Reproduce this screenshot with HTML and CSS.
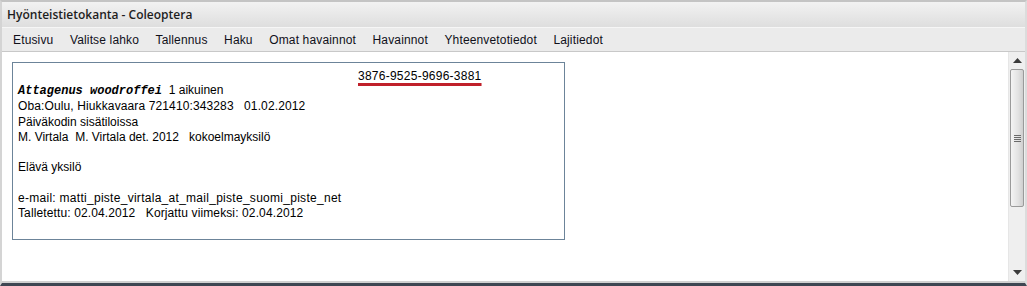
FILE: index.html
```html
<!DOCTYPE html>
<html lang="fi">

<head>
    <title>Hyönteistietokanta - Coleoptera</title>
    <link rel="stylesheet" href="styles.css">
</head>

<body>
    <div class="window">
        <div class="title-bar">Hyönteistietokanta - Coleoptera</div>

        <div class="menu-bar">
            <span class="menu-item">Etusivu</span>
            <span class="menu-item">Valitse lahko</span>
            <span class="menu-item">Tallennus</span>
            <span class="menu-item">Haku</span>
            <span class="menu-item">Omat havainnot</span>
            <span class="menu-item">Havainnot</span>
            <span class="menu-item">Yhteenvetotiedot</span>
            <span class="menu-item">Lajitiedot</span>
        </div>

        <div class="content">
            <div class="main">
                <div class="record">
                    <div class="record-id"><span class="id-code">3876-9525-9696-3881</span></div>
                    <div class="line"><span class="species">Attagenus woodroffei</span>&nbsp; 1 aikuinen</div>
                    <div class="line wide">Oba:Oulu, Hiukkavaara 721410:343283 &nbsp; 01.02.2012</div>
                    <div class="line">Päiväkodin sisätiloissa</div>
                    <div class="line">M. Virtala&nbsp; M. Virtala det. 2012 &nbsp; kokoelmayksilö</div>
                    <div class="line">&nbsp;</div>
                    <div class="line">Elävä yksilö</div>
                    <div class="line">&nbsp;</div>
                    <div class="line email">e-mail: matti_piste_virtala_at_mail_piste_suomi_piste_net</div>
                    <div class="line wide">Talletettu: 02.04.2012 &nbsp; Korjattu viimeksi: 02.04.2012</div>
                </div>
            </div>

            <div class="scrollbar">
                <div class="scroll-arrow">
                    <svg width="9" height="5" viewBox="0 0 9 5"><path d="M4.5 0 L9 5 L0 5 Z" fill="#3a3a3a"></path></svg>
                </div>
                <div class="scroll-track">
                    <div class="scroll-thumb">
                        <div class="grip"><span></span><span></span><span></span><span></span></div>
                    </div>
                </div>
                <div class="scroll-arrow">
                    <svg width="9" height="5" viewBox="0 0 9 5"><path d="M0 0 L9 0 L4.5 5 Z" fill="#3a3a3a"></path></svg>
                </div>
            </div>
        </div>
    </div>
</body>

</html>
```

FILE: styles.css
```css
html,
body {
    margin: 0;
    padding: 0;
    background-color: #ffffff;
}

.window {
    height: 286px;
    box-sizing: border-box;
    display: flex;
    flex-direction: column;
    border-top: 2px solid #c4c4c4;
    border-left: 2px solid #d4d4d4;
    border-right: 2px solid #dcdcdc;
    border-bottom: 3px solid #3e4652;
    font-family: "Liberation Sans", Arial, sans-serif;
    color: #000000;
}

.title-bar {
    height: 25px;
    line-height: 25px;
    padding-left: 5px;
    background: linear-gradient(#f2f2f2, #dedede);
    border-bottom: 1px solid #f6f6f6;
    font-family: "Open Sans", "DejaVu Sans", sans-serif;
    font-weight: 600;
    font-size: 12px;
    color: #1e1e1e;
}

.menu-bar {
    height: 23px;
    display: flex;
    align-items: center;
    padding-left: 11px;
    background-color: #ebebeb;
    border-bottom: 1px solid #c8c8c8;
    font-size: 12px;
    letter-spacing: 0.15px;
    color: #10101a;
}

.menu-item {
    margin-right: 16.5px;
}

.content {
    flex: 1;
    display: flex;
    min-height: 0;
    border-bottom: 2px solid #d0d0d0;
}

.main {
    flex: 1;
    padding: 10px 0 0 10px;
}

.record {
    width: 553px;
    height: 178px;
    box-sizing: border-box;
    border: 1px solid #6c8499;
    padding: 6px 0 0 5px;
    font-size: 12px;
    line-height: 15.25px;
}

.record-id {
    height: 14px;
    line-height: 14px;
    padding-left: 340px;
}

.id-code {
    letter-spacing: 0.25px;
    text-decoration: underline;
    text-decoration-color: #c0202a;
    text-decoration-thickness: 3px;
    text-underline-offset: 3px;
}

.line.wide {
    letter-spacing: 0.12px;
}

.line.email {
    letter-spacing: 0.28px;
}

.species {
    font-family: "Liberation Mono", "Courier New", monospace;
    font-weight: bold;
    font-style: italic;
}

.scrollbar {
    width: 16px;
    display: flex;
    flex-direction: column;
    background-color: #efefef;
    border-left: 1px solid #e6e6e6;
}

.scroll-arrow {
    height: 17px;
    display: flex;
    align-items: center;
    justify-content: center;
}

.scroll-track {
    flex: 1;
}

.scroll-thumb {
    height: 138px;
    margin: 0 1px;
    box-sizing: border-box;
    border: 1px solid #9a9a9a;
    border-radius: 2px;
    background: linear-gradient(90deg, #f4f4f4, #e2e2e2 60%, #cfcfcf);
    display: flex;
    align-items: center;
    justify-content: center;
}

.grip {
    display: flex;
    flex-direction: column;
    gap: 1px;
}

.grip span {
    display: block;
    width: 7px;
    height: 1px;
    background-color: #6a6a6a;
}
```
